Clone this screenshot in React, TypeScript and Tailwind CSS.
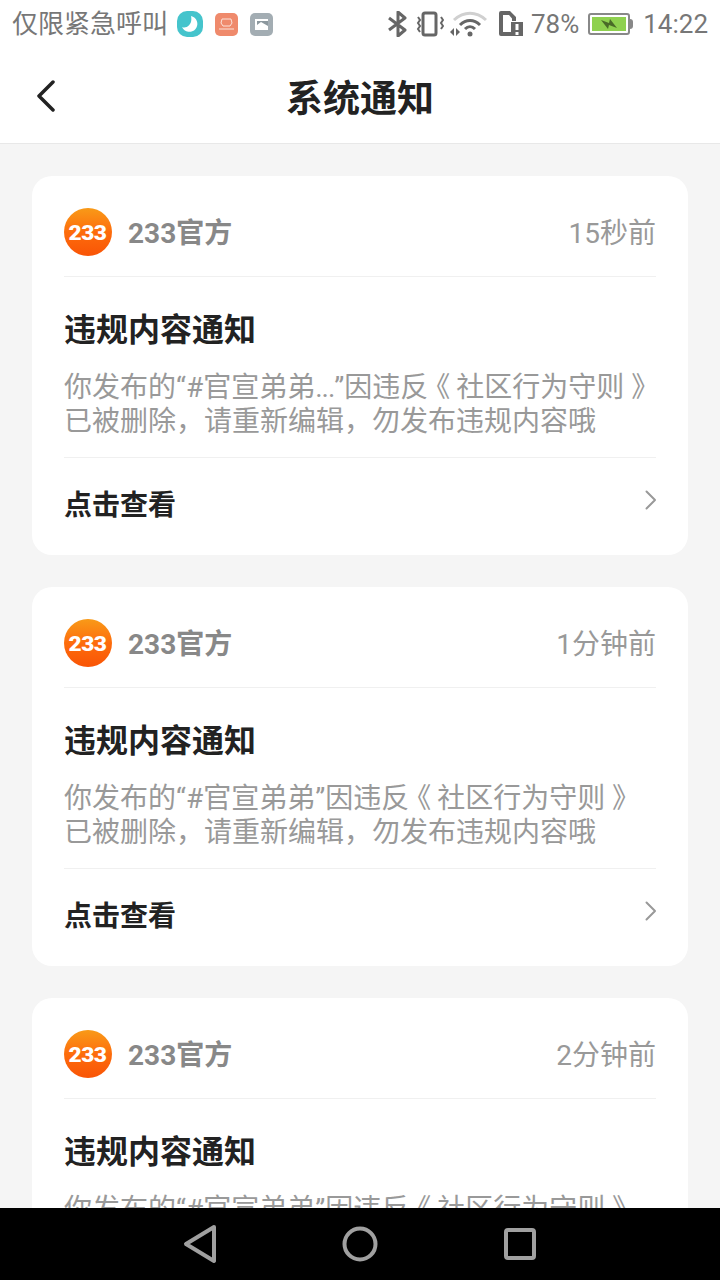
const FONT = "font-['Roboto','Noto_Sans_CJK_SC',sans-serif]";

function Logo233() {
  return (
    <div className="flex h-12 w-12 shrink-0 items-center justify-center rounded-full bg-gradient-to-b from-[#f89a18] via-[#fd6c0c] to-[#f95406]">
      <span className="translate-y-[1px] scale-x-[1.08] text-[21px] leading-none font-black tracking-[-0.5px] text-white font-['Roboto',sans-serif]">233</span>
    </div>
  );
}

function Card({ time, body }: { time: string; body: React.ReactNode }) {
  return (
    <div className="mx-8 h-[379px] shrink-0 rounded-[20px] bg-white px-8">
      <div className="flex h-[101px] items-center justify-between border-b border-[#f0f0f0] pt-[12px]">
        <div className="flex items-center gap-4">
          <Logo233 />
          <span className="translate-y-[2px] text-[28px] font-bold text-[#888888]">233官方</span>
        </div>
        <span className="translate-y-[2px] text-[28px] text-[#999999]">{time}</span>
      </div>
      <div className="h-[94px] pt-[33px] text-[32px] leading-[40px] font-bold whitespace-nowrap text-[#222222]">
        违规内容通知
      </div>
      <div className="h-[87px] border-b border-[#f0f0f0] text-[28px] leading-[34px] whitespace-nowrap text-[#999999]">
        <div>{body}</div>
        <div>已被删除，请重新编辑，勿发布违规内容哦</div>
      </div>
      <div className="flex items-start justify-between pt-[28px]">
        <span className="text-[28px] leading-[40px] font-bold text-[#222222]">点击查看</span>
        <svg width="12" height="20" viewBox="0 0 12 20" fill="none" className="mt-[4px] translate-x-[1px]">
          <path d="M1.5 1.5 10 10l-8.5 8.5" stroke="#999999" strokeWidth="2" strokeLinecap="round" strokeLinejoin="round" />
        </svg>
      </div>
    </div>
  );
}

function StatusIcons() {
  return (
    <div className="flex items-center gap-[5px]">
      <svg width="22" height="26" viewBox="0 0 22 26" fill="none" stroke="#666666" strokeWidth="3" className="mr-[2px]">
        <path d="M2 7l16 12-7 6V1l7 6L2 19" strokeLinejoin="round" />
      </svg>
      <svg width="28" height="26" viewBox="0 0 28 26" fill="none" stroke="#666666" strokeWidth="2">
        <rect x="7" y="2" width="13" height="22" rx="2" strokeWidth="3" />
        <path d="M2 6l2 3-2 3 2 3-2 3 2 3M25 6l2 3-2 3 2 3-2 3" />
      </svg>
      <svg width="38" height="26" viewBox="0 0 38 26" fill="none">
        <path d="M5 9C15 0 27 0 37 9" stroke="#d0d0d0" strokeWidth="3" />
        <path d="M11 14c6-6 14-6 20 0M16 18c3-3 7-3 10 0" stroke="#666666" strokeWidth="3" />
        <circle cx="21" cy="23" r="2.5" fill="#666666" />
        <path d="M1 21l4-4v8zM7 17l4 4-4 4z" fill="#666666" />
      </svg>
      <svg width="26" height="28" viewBox="0 0 26 28" className="ml-[6px]">
        <path d="M1 3a2 2 0 0 1 2-2h9l6 6v4h-4V8.5L11 5H5v17h8v4H3a2 2 0 0 1-2-2z" fill="#666666" />
        <rect x="13" y="12" width="12" height="14" fill="#666666" />
        <rect x="17.5" y="14" width="3" height="6" fill="#ffffff" />
        <rect x="17.5" y="22" width="3" height="3" fill="#ffffff" />
      </svg>
    </div>
  );
}

function Body({ dots }: { dots?: boolean }) {
  return (
    <>
      你发布的“#官宣弟弟{dots ? <span className="tracking-[-1px]">...</span> : null}”因违反
      <span className="mr-[6px] -ml-[6px] inline-block">《</span>社区行为守则 》
    </>
  );
}

export default function App() {
  return (
    <div className={`flex h-[1280px] w-[720px] flex-col overflow-hidden bg-[#f5f5f5] ${FONT}`}>
      <div className="flex h-[48px] shrink-0 items-center justify-between bg-white pr-3 pl-3 text-[#777777]">
        <div className="flex items-center">
          <span className="text-[26px] leading-none whitespace-nowrap">仅限紧急呼叫</span>
          <div className="ml-[9px] flex items-center gap-3">
            <div className="flex h-[26px] w-[26px] items-center justify-center rounded-[10px] bg-[#45c4cc]">
              <svg width="20" height="20" viewBox="0 0 20 20"><path d="M11 2a8 8 0 1 1-9 11c4 2 11-2 9-11z" fill="#ffffff" /></svg>
            </div>
            <div className="flex h-[23px] w-[23px] items-center justify-center rounded-[5px] bg-[#ef8a6c]">
              <svg width="17" height="15" viewBox="0 0 17 15" fill="none" stroke="#fbe3da" strokeWidth="1"><path d="M4 2h9l1 4-2 3H5L3 6zM1 12h15" /></svg>
            </div>
            <div className="flex h-[23px] w-[23px] items-center justify-center rounded-[5px] bg-[#a3adb3]">
              <svg width="15" height="15" viewBox="0 0 15 15"><rect x="1" y="2" width="13" height="11" fill="#ffffff" /><path d="M14 6v3L7 5 3 8V4h11z" fill="#8c989e" /></svg>
            </div>
          </div>
        </div>
        <div className="flex items-center">
          <StatusIcons />
          <span className="ml-[7px] text-[26px] leading-none">78%</span>
          <div className="ml-[9px] flex items-center">
            <div className="flex h-[22px] w-[42px] items-center justify-center rounded-[3px] border-2 border-[#888888] p-[2px]">
              <div className="flex h-full w-full items-center justify-center bg-[#8fd14f]">
                <svg width="18" height="12" viewBox="0 0 18 12"><path d="M1 2l8 3 1-4 7 9-8-3-1 4z" fill="#4a6b28" /></svg>
              </div>
            </div>
            <div className="h-[10px] w-[3px] rounded-r-sm bg-[#888888]" />
          </div>
          <span className="ml-[10px] text-[26px] leading-none">14:22</span>
        </div>
      </div>

      <div className="relative flex h-[96px] shrink-0 items-center justify-center border-b border-[#e8e8e8] bg-white">
        <svg width="20" height="32" viewBox="0 0 20 32" fill="none" className="absolute top-[32px] left-[36px]">
          <path d="M17 2 3 16l14 14" stroke="#222222" strokeWidth="3.5" strokeLinecap="round" strokeLinejoin="round" />
        </svg>
        <span className="translate-y-[4px] text-[37px] font-bold text-[#222222]">系统通知</span>
      </div>

      <div className="flex min-h-0 flex-1 flex-col gap-8 overflow-hidden pt-8">
        <Card time="15秒前" body={<Body dots />} />
        <Card time="1分钟前" body={<Body />} />
        <Card time="2分钟前" body={<Body />} />
      </div>

      <div className="flex h-[72px] shrink-0 items-center justify-center bg-black">
        <div className="flex w-[160px] justify-center">
          <svg width="36" height="40" viewBox="0 0 36 40" fill="none">
            <path d="M32 3 4 20l28 17z" stroke="#a0a0a0" strokeWidth="4" strokeLinejoin="round" />
          </svg>
        </div>
        <div className="flex w-[160px] justify-center">
          <svg width="36" height="36" viewBox="0 0 36 36" fill="none">
            <circle cx="18" cy="18" r="15.5" stroke="#a0a0a0" strokeWidth="4" />
          </svg>
        </div>
        <div className="flex w-[160px] justify-center">
          <svg width="32" height="32" viewBox="0 0 32 32" fill="none">
            <rect x="2" y="2" width="28" height="28" rx="2" stroke="#a0a0a0" strokeWidth="4" />
          </svg>
        </div>
      </div>
    </div>
  );
}
